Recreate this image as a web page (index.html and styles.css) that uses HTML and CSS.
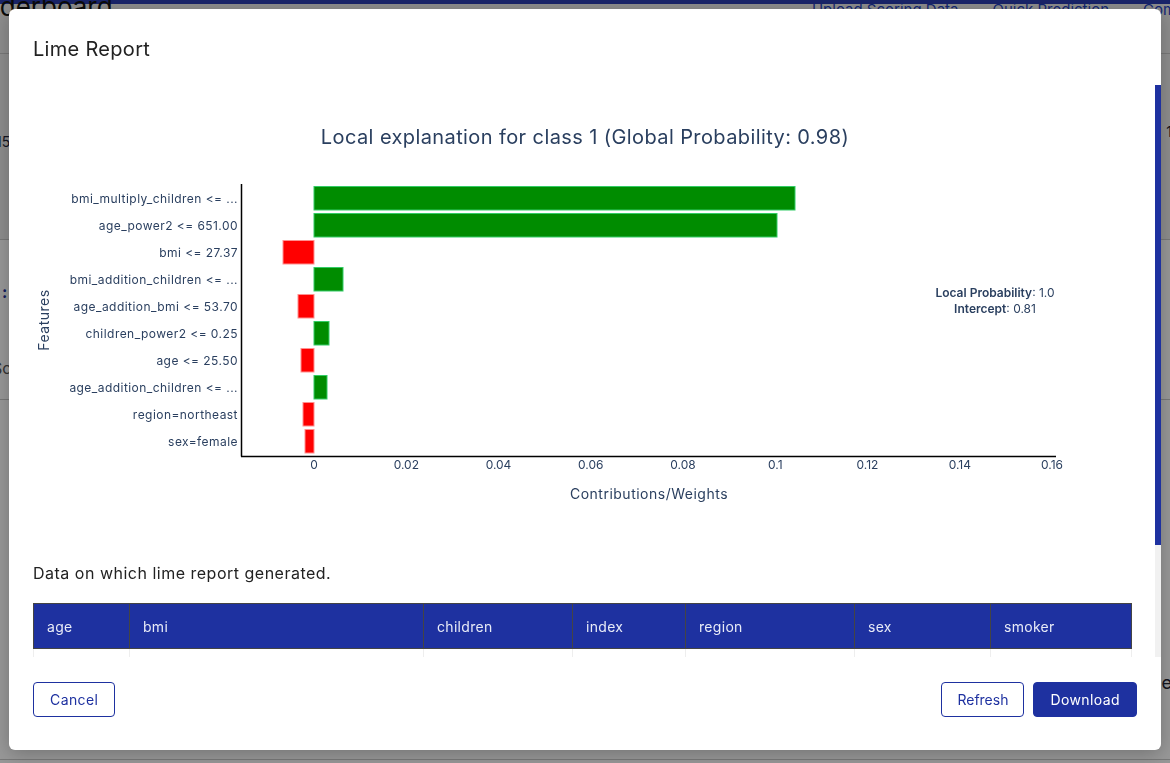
FILE: index.html
```html
<!DOCTYPE html>
<html>
<head>
<meta charset="utf-8">
<link rel="stylesheet" href="styles.css">
</head>
<body>
<div class="page">
  <div class="topstripe"></div>
  <div class="pagehead">
    <div class="pagetitle">Leaderboard</div>
    <nav class="pagenav">
      <span>Upload Scoring Data</span>
      <span>Quick Prediction</span>
      <span>Compare</span>
    </nav>
  </div>
  <div class="pagerow r1"><span class="lcell">15</span><span class="rcell">1</span></div>
  <div class="pagerow r2">
    <div class="lcol"><span class="dots">:</span><span class="sc">Sc</span></div>
  </div>
  <div class="pagerow r4"><span class="rcell">e</span></div>
</div>

<div class="overlay"></div>

<div class="modal">
  <div class="modal-header">Lime Report</div>
  <div class="modal-body">
    <div class="body-content">
      <svg class="chart" width="1098" height="450" viewBox="0 0 1098 450" xmlns="http://www.w3.org/2000/svg">
        <text class="ctitle" x="552" y="59" text-anchor="middle">Local explanation for class 1 (Global Probability: 0.98)</text>
        <g class="bars">
          <rect class="pos" x="281" y="101.5" width="481" height="23.5"/>
          <rect class="pos" x="281" y="128.5" width="463" height="23.5"/>
          <rect class="neg" x="250" y="155.5" width="31" height="23.5"/>
          <rect class="pos" x="281" y="182.5" width="29" height="23.5"/>
          <rect class="neg" x="265" y="209.5" width="16" height="23.5"/>
          <rect class="pos" x="281" y="236.5" width="15" height="23.5"/>
          <rect class="neg" x="268" y="263.5" width="13" height="23.5"/>
          <rect class="pos" x="281" y="290.5" width="13" height="23.5"/>
          <rect class="neg" x="270" y="317.5" width="11" height="23.5"/>
          <rect class="neg" x="272" y="344.5" width="9" height="23.5"/>
        </g>
        <line class="axis" x1="208.5" y1="99" x2="208.5" y2="371.5"/>
        <line class="axis" x1="208" y1="371.5" x2="1023" y2="371.5"/>
        <g class="ylabels" text-anchor="end">
          <text x="205" y="117.5">bmi_multiply_children &lt;= ...</text>
          <text x="205" y="144.5">age_power2 &lt;= 651.00</text>
          <text x="205" y="171.5">bmi &lt;= 27.37</text>
          <text x="205" y="198.5">bmi_addition_children &lt;= ...</text>
          <text x="205" y="225.5">age_addition_bmi &lt;= 53.70</text>
          <text x="205" y="252.5">children_power2 &lt;= 0.25</text>
          <text x="205" y="279.5">age &lt;= 25.50</text>
          <text x="205" y="306.5">age_addition_children &lt;= ...</text>
          <text x="205" y="333.5">region=northeast</text>
          <text x="205" y="360.5">sex=female</text>
        </g>
        <g class="xlabels" text-anchor="middle">
          <text x="281" y="384">0</text>
          <text x="373.3" y="384">0.02</text>
          <text x="465.5" y="384">0.04</text>
          <text x="557.8" y="384">0.06</text>
          <text x="650" y="384">0.08</text>
          <text x="742.3" y="384">0.1</text>
          <text x="834.5" y="384">0.12</text>
          <text x="926.8" y="384">0.14</text>
          <text x="1019" y="384">0.16</text>
        </g>
        <text class="atitle" x="616" y="414" text-anchor="middle">Contributions/Weights</text>
        <text class="atitle" x="0" y="0" text-anchor="middle" transform="translate(16 235) rotate(-90)">Features</text>
        <g class="annot" text-anchor="middle">
          <text x="962" y="212"><tspan class="b">Local Probability</tspan>: 1.0</text>
          <text x="962" y="228"><tspan class="b">Intercept</tspan>: 0.81</text>
        </g>
      </svg>
      <p class="data-caption">Data on which lime report generated.</p>
      <table class="data-table">
        <colgroup>
          <col style="width:96px"><col style="width:294px"><col style="width:149px"><col style="width:113px"><col style="width:169px"><col style="width:136px"><col style="width:141px">
        </colgroup>
        <thead>
          <tr><th>age</th><th>bmi</th><th>children</th><th>index</th><th>region</th><th>sex</th><th>smoker</th></tr>
        </thead>
        <tbody>
          <tr><td>19</td><td>27.9</td><td>0</td><td>0</td><td>northeast</td><td>female</td><td>yes</td></tr>
        </tbody>
      </table>
    </div>
    <div class="scroll-track"><div class="scroll-thumb"></div></div>
  </div>
  <div class="modal-footer">
    <button class="btn btn-outline">Cancel</button>
    <div class="spacer"></div>
    <button class="btn btn-outline btn-tight">Refresh</button>
    <button class="btn btn-solid">Download</button>
  </div>
</div>
</body>
</html>
```

FILE: styles.css
```css
* { box-sizing: border-box; }
html, body { margin: 0; padding: 0; }
body {
  width: 1170px;
  height: 763px;
  overflow: hidden;
  font-family: "Inter", "Noto Sans", sans-serif;
  background: #fff;
}

/* background page */
.page { width: 1170px; height: 763px; background: #fdfdfd; overflow: hidden; }
.topstripe { height: 4px; background: #2a3cb0; }
.pagehead {
  height: 50px;
  display: flex;
  align-items: flex-start;
  border-bottom: 1px solid #c8c8c8;
  background: #ececec;
}
.pagetitle {
  font-size: 26px;
  line-height: 22px;
  margin-top: -8px;
  margin-left: -45px;
  color: #111;
}
.pagenav {
  margin-left: auto;
  display: flex;
  gap: 34px;
  font-size: 15px;
  line-height: 12px;
  color: #1e40c0;
  margin-right: -38px;
}
.pagerow {
  display: flex;
  justify-content: space-between;
  border-bottom: 1px solid #c8c8c8;
  font-size: 14px;
  color: #223;
}
.r1 { height: 186px; align-items: center; background: #ececec; }
.r2 { height: 160px; background: #fdfdfd; }
.r4 { height: 360px; align-items: flex-start; padding-top: 272px; background: #fdfdfd; }
.lcell { margin-left: -4px; margin-top: -10px; }
.rcell { margin-left: auto; margin-right: -2px; margin-top: -30px; }
.r4 .rcell { margin-top: 0; font-size: 18px; }
.lcol { display: flex; flex-direction: column; }
.dots { color: #1e31a0; font-weight: 700; margin-top: 42px; margin-left: 2px; font-size: 16px; }
.sc { margin-top: 56px; margin-left: -8px; font-size: 16px; color: #555; }

.overlay {
  position: fixed;
  inset: 0;
  background: rgba(0, 0, 0, 0.4);
}

/* modal */
.modal {
  position: fixed;
  left: 9px;
  top: 9px;
  width: 1152px;
  height: 741px;
  background: #fff;
  border-radius: 6px;
  box-shadow: 0 4px 20px rgba(0,0,0,0.25);
  display: flex;
  flex-direction: column;
  overflow: hidden;
}
.modal-header {
  height: 76px;
  padding: 26px 24px 0 24px;
  font-size: 20px;
  line-height: 28px;
  letter-spacing: 0.3px;
  color: #222;
  flex: none;
}
.modal-body {
  height: 572px;
  flex: none;
  display: flex;
}
.body-content {
  flex: 1;
  overflow: hidden;
  padding: 0 24px;
}
.scroll-track {
  width: 6px;
  flex: none;
  background: #f1f1f1;
}
.scroll-thumb {
  height: 460px;
  background: #1e31a0;
}

.chart { display: block; }
.chart text { font-family: "Inter", "Noto Sans", sans-serif; fill: #2a3f5f; }
.ctitle { font-size: 20px; letter-spacing: 0.4px; }
.ylabels text { font-size: 12px; letter-spacing: 0.45px; }
.xlabels text, .annot text { font-size: 12px; }
.atitle { font-size: 14px; letter-spacing: 0.5px; }
.annot .b { font-weight: 600; }
.axis { stroke: #000; stroke-width: 1.5; }
.pos { fill: #008c00; stroke: #33cc66; stroke-width: 1; }
.neg { fill: #ff0000; stroke: #ff9090; stroke-width: 1; }

.data-caption {
  margin: 26px 0 18px 0;
  font-size: 16px;
  line-height: 24px;
  letter-spacing: 0.5px;
  color: #222;
}
.data-table {
  border-collapse: collapse;
  table-layout: fixed;
  width: 1098px;
  font-size: 14px;
  letter-spacing: 0.3px;
}
.data-table th {
  height: 45px;
  background: #1e31a0;
  color: #e8ebf7;
  font-weight: 400;
  text-align: left;
  padding: 0 13px;
  border: 1px solid #444;
}
.data-table td {
  height: 45px;
  padding: 0 13px;
  border-left: 1px solid #eee;
  border-right: 1px solid #eee;
  color: #333;
}

.modal-footer {
  flex: 1;
  display: flex;
  align-items: flex-start;
  gap: 9px;
  padding: 25px 24px 0 24px;
}
.spacer { flex: 1; }
.btn {
  height: 35px;
  padding: 0 16px;
  font-family: "Inter", "Noto Sans", sans-serif;
  font-size: 14px;
  letter-spacing: 0.4px;
  border-radius: 4px;
  border: 1px solid #1e31a0;
  cursor: pointer;
}
.btn-tight { letter-spacing: 0; padding: 0 15px; }
.btn-outline { background: #fff; color: #1e31a0; }
.btn-solid { background: #1e31a0; color: #fff; }
```
